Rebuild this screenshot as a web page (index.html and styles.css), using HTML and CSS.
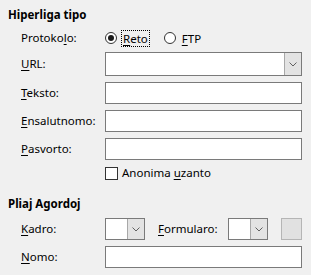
FILE: index.html
```html
<!DOCTYPE html>
<html lang="eo">
<head>
    <meta charset="UTF-8">
    <title>Hiperligo</title>
    <link rel="stylesheet" href="styles.css">
</head>
<body>
    <div class="dialog">
        <div class="group-title">Hiperliga tipo</div>

        <div class="row row-protocol">
            <span class="label">Protoko<u>l</u>o:</span>
            <div class="radios">
                <span class="radio checked"></span>
                <span class="radio-text focused"><u>R</u>eto</span>
                <span class="radio"></span>
                <span class="radio-text"><u>F</u>TP</span>
            </div>
        </div>

        <div class="row row-url">
            <span class="label"><u>U</u>RL:</span>
            <div class="combo combo-wide">
                <span class="combo-field"></span>
                <span class="combo-btn">
                    <svg width="8" height="5" viewBox="0 0 8 5"><path d="M0.5 0.5 L4 4 L7.5 0.5" fill="none" stroke="#606060" stroke-width="1"/></svg>
                </span>
            </div>
        </div>

        <div class="row">
            <span class="label"><u>T</u>eksto:</span>
            <span class="text-field"></span>
        </div>

        <div class="row">
            <span class="label"><u>E</u>nsalutnomo:</span>
            <span class="text-field"></span>
        </div>

        <div class="row">
            <span class="label"><u>P</u>asvorto:</span>
            <span class="text-field"></span>
        </div>

        <div class="row row-check">
            <span class="checkbox"></span>
            <span class="check-text">Anonima <u>u</u>zanto</span>
        </div>

        <div class="group-title second">Pliaj Agordoj</div>

        <div class="row">
            <span class="label"><u>K</u>adro:</span>
            <div class="combo combo-small">
                <span class="combo-field"></span>
                <span class="combo-btn">
                    <svg width="8" height="5" viewBox="0 0 8 5"><path d="M0.5 0.5 L4 4 L7.5 0.5" fill="none" stroke="#606060" stroke-width="1"/></svg>
                </span>
            </div>
            <span class="inline-label"><u>F</u>ormularo:</span>
            <div class="combo combo-small">
                <span class="combo-field"></span>
                <span class="combo-btn">
                    <svg width="8" height="5" viewBox="0 0 8 5"><path d="M0.5 0.5 L4 4 L7.5 0.5" fill="none" stroke="#606060" stroke-width="1"/></svg>
                </span>
            </div>
            <span class="square-btn"></span>
        </div>

        <div class="row">
            <span class="label"><u>N</u>omo:</span>
            <span class="text-field"></span>
        </div>
    </div>
</body>
</html>
```

FILE: styles.css
```css
body {
    margin: 0;
    background-color: #f0f0f0;
    font-family: "Noto Sans", "Open Sans", sans-serif;
    font-size: 11.5px;
    color: #000000;
}

.dialog {
    width: 311px;
    height: 275px;
    padding: 0 9px 0 8px;
    box-sizing: border-box;
}

.group-title {
    font-weight: bold;
    line-height: 16px;
    margin-top: 7px;
}

.group-title.second {
    margin-top: 16px;
}

.row {
    display: flex;
    align-items: center;
    height: 22px;
    margin-top: 6px;
    padding-left: 13px;
}

.row-protocol {
    height: 16px;
    margin-top: 7px;
}

.row-url {
    height: 24px;
}

.row-check {
    height: 14px;
    padding-left: 97px;
}

.label {
    width: 84px;
    flex: none;
    line-height: 16px;
}

u {
    text-decoration-thickness: 1px;
    text-underline-offset: 2px;
}

.radios {
    display: flex;
    align-items: center;
}

.radio {
    width: 12px;
    height: 12px;
    box-sizing: border-box;
    border: 1px solid #333333;
    border-radius: 50%;
    background-color: #ffffff;
    position: relative;
}

.radio.checked::after {
    content: "";
    position: absolute;
    left: 2px;
    top: 2px;
    width: 6px;
    height: 6px;
    border-radius: 50%;
    background-color: #1a1a1a;
}

.radio-text {
    margin-left: 4px;
    margin-right: 14px;
    padding: 0 1px;
    line-height: 15px;
    border: 1px solid transparent;
}

.radio-text.focused {
    border: 1px dotted #000000;
}

.text-field {
    flex: 1;
    height: 100%;
    box-sizing: border-box;
    border: 1px solid #7a7a7a;
    background-color: #ffffff;
}

.combo {
    display: flex;
    height: 100%;
    box-sizing: border-box;
    border: 1px solid #7a7a7a;
    background-color: #ffffff;
}

.combo-wide {
    flex: 1;
}

.combo-small {
    width: 40px;
    flex: none;
}

.combo-field {
    flex: 1;
}

.combo-btn {
    width: 16px;
    display: flex;
    align-items: center;
    justify-content: center;
    background-color: #e3e3e3;
    border-left: 1px solid #a8a8a8;
}

.inline-label {
    margin-left: 13px;
    width: 70px;
    flex: none;
    line-height: 16px;
}

.square-btn {
    width: 22px;
    height: 22px;
    margin-left: 13px;
    box-sizing: border-box;
    border: 1px solid #b5b5b5;
    background-color: #e1e1e1;
}

.checkbox {
    width: 13px;
    height: 13px;
    box-sizing: border-box;
    border: 1px solid #333333;
    background-color: #ffffff;
}

.check-text {
    margin-left: 4px;
    line-height: 16px;
}
```
